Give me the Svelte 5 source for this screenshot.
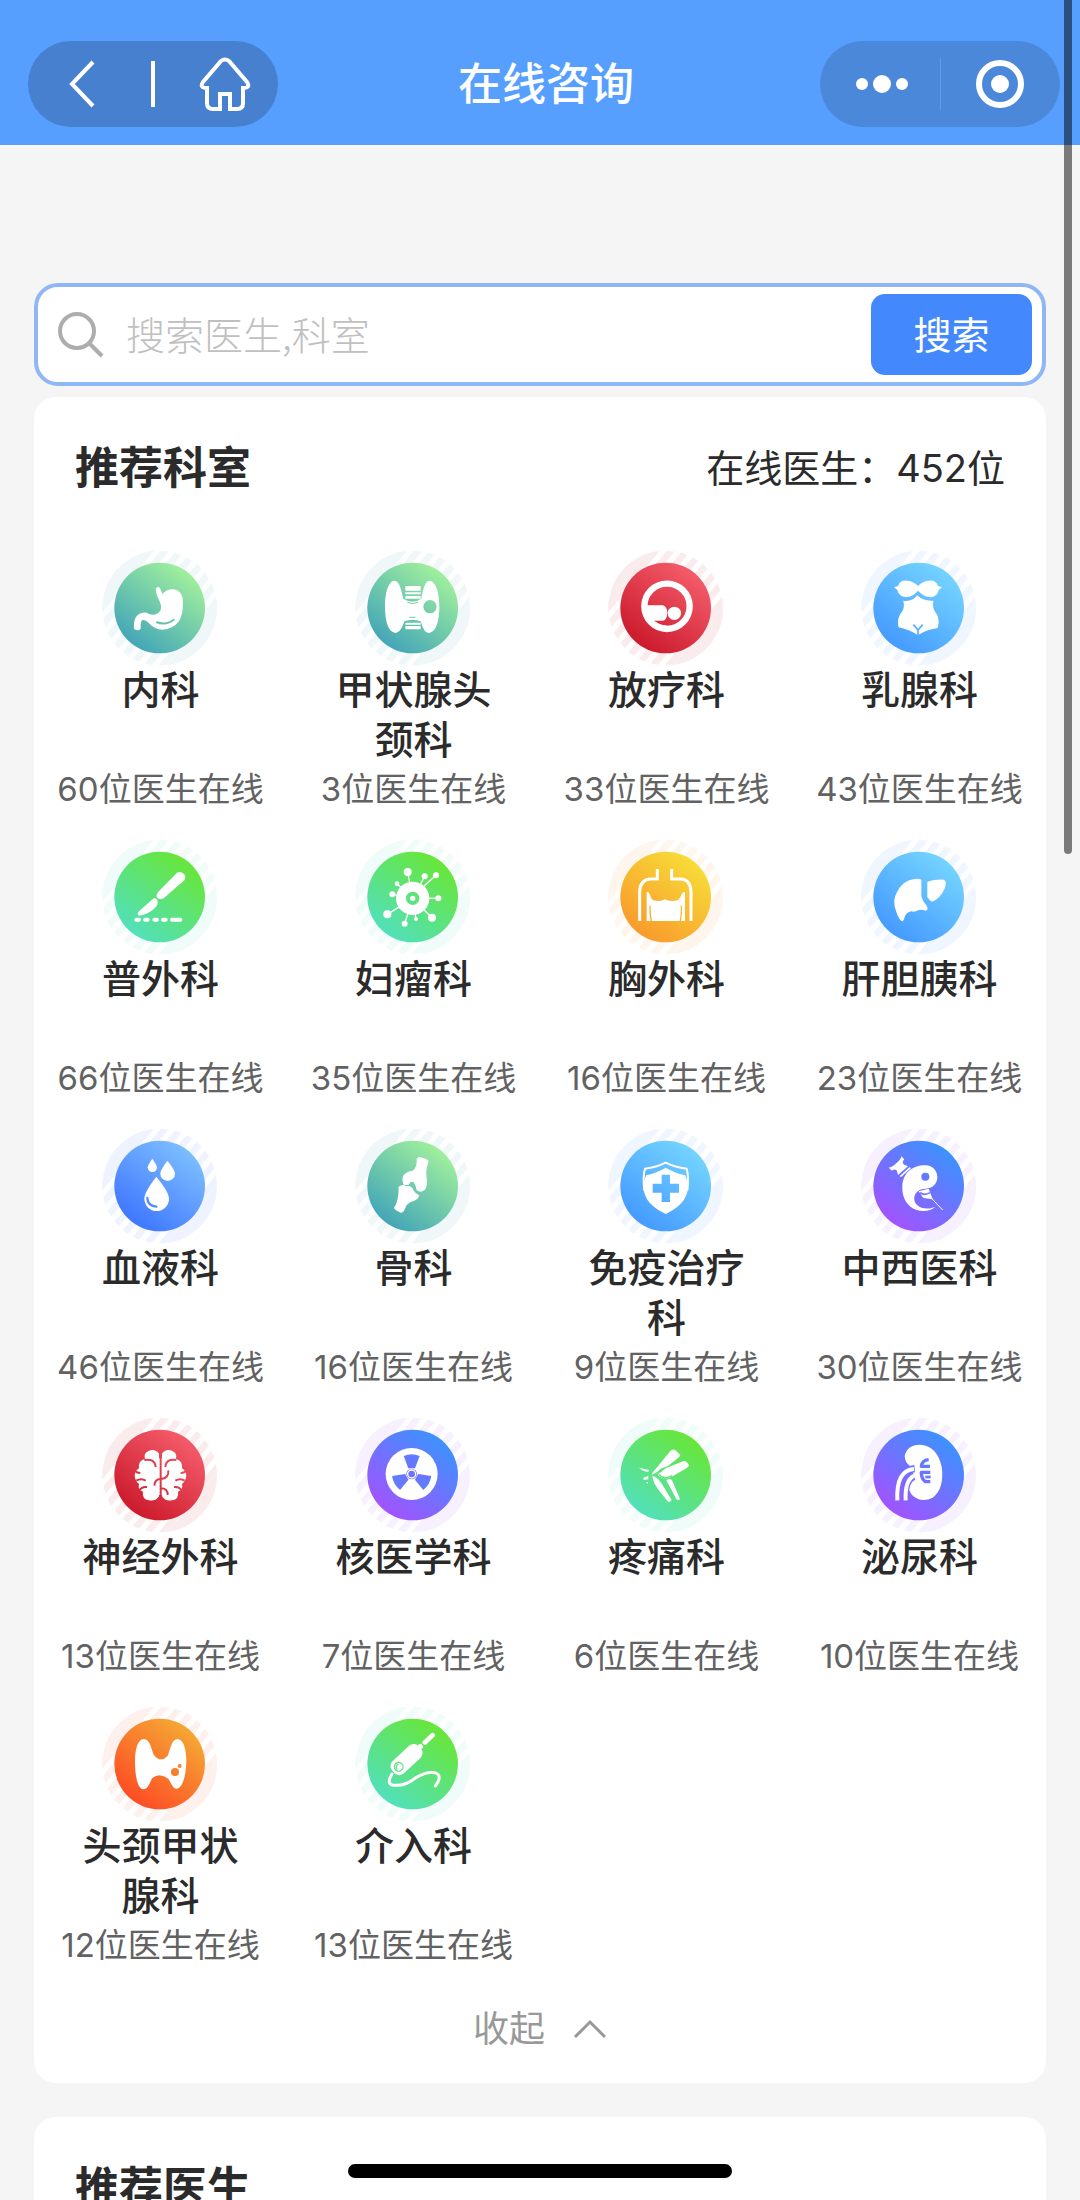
<script>
  let keyword = $state('');

  const palettes = {
    teal: ['#43a5b8', '#a0f09c'],
    red: ['#cb1a2c', '#f45c6a'],
    sky: ['#459aff', '#74d4ff'],
    green: ['#52e0bc', '#68e638'],
    yellow: ['#f99a2c', '#f7dc38'],
    blue: ['#3f76ff', '#7cbeff'],
    purple: ['#a253ff', '#3c92ff'],
    orange: ['#fd4c24', '#f5a834'],
  };

  const departments = [
    { name: '内科', count: 60, icon: 'stomach', color: 'teal' },
    { name: '甲状腺头颈科', count: 3, icon: 'thyroid', color: 'teal' },
    { name: '放疗科', count: 33, icon: 'scanner', color: 'red' },
    { name: '乳腺科', count: 43, icon: 'torso', color: 'sky' },
    { name: '普外科', count: 66, icon: 'scalpel', color: 'green' },
    { name: '妇瘤科', count: 35, icon: 'virus', color: 'green' },
    { name: '胸外科', count: 16, icon: 'chest', color: 'yellow' },
    { name: '肝胆胰科', count: 23, icon: 'liver', color: 'sky' },
    { name: '血液科', count: 46, icon: 'blood', color: 'blue' },
    { name: '骨科', count: 16, icon: 'bone', color: 'teal' },
    { name: '免疫治疗科', count: 9, icon: 'shield', color: 'sky' },
    { name: '中西医科', count: 30, icon: 'taiji', color: 'purple' },
    { name: '神经外科', count: 13, icon: 'brain', color: 'red' },
    { name: '核医学科', count: 7, icon: 'nuclear', color: 'purple' },
    { name: '疼痛科', count: 6, icon: 'knee', color: 'green' },
    { name: '泌尿科', count: 10, icon: 'kidney', color: 'purple' },
    { name: '头颈甲状腺科', count: 12, icon: 'neck', color: 'orange' },
    { name: '介入科', count: 13, icon: 'catheter', color: 'green' },
  ];

  // x, y, radius of each spike on the virus icon
  const spikes = [
    [-15, -75, 12], [36, -62, 9], [70, -65, 9], [-47, -40, 7], [-61, -8, 9],
    [77, 4, 9], [-76, 52, 12], [-24, 80, 9], [10, 66, 6], [58, 62, 12],
  ];
</script>

{#snippet glyph(icon, paint)}
  {#if icon === 'stomach'}
    <path d="M-12-58Q-6-67 1-60L8-42Q22-58 42-56Q70-52 70-18Q70 20 58 40Q38 65 8 65Q-15 64-30 48Q-42 34-52 36Q-58 40-57 62Q-66 72-77 62Q-80 20-52 14Q-42 12-33 17Q-12 26 2 8Q8-4-2-24Q-11-40-12-58Z" />
    <path d="M-10 42Q20 54 44 34" fill="none" stroke={paint} stroke-width="6" />
  {:else if icon === 'thyroid'}
    <path d="M-55-82C-38-82-34-50-28-28Q0-10 26-28C30-50 36-82 50-82C72-80 80-40 80-5C80 40 70 74 48 75C34 74 30 55 24 40Q0 30-25 40C-30 55-38 75-52 75C-74 72-83 40-83-5C-83-40-75-80-55-82Z" />
    <path d="M-22-66h46v14h-46zM-22-47h46v6h-46zM-22-36h46v8h-46zM-22 44h46v6h-46zM-22 54h46v10h-46z" />
    <circle cx="52" cy="-4" r="20" fill={paint} />
    <path d="M-16-17Q0-9 16-17M-10 28H8" fill="none" stroke={paint} stroke-width="3" />
  {:else if icon === 'scanner'}
    <circle cx="4" cy="-5" r="68" fill="none" stroke="#fff" stroke-width="19" />
    <path d="M-62-8H-8Q4-4 5 14Q4 36-8 38H-36Q-20 50 2 52L0 64Q-50 54-60 14Z" />
    <circle cx="26" cy="16" r="20" />
  {:else if icon === 'torso'}
    <path d="M-74-62L-62-66Q-56-84-34-82Q-14-80-2-66Q10-80 30-82Q52-84 58-66L70-62L60-54Q56-32 34-32Q14-34-2-52Q-16-34-38-32Q-60-34-64-54Z" />
    <path d="M-46-22Q-20-18-4-38Q12-20 44-22Q40 3 54 18Q64 36 57 60Q20 66-2 82Q-25 66-60 58Q-66 36-55 18Q-40 3-46-22Z" />
    <path d="M-16 50L-2 66L12 50M-2 66V82" fill="none" stroke={paint} stroke-width="5" />
  {:else if icon === 'scalpel'}
    <path d="M52-73Q62-79 73-69Q80-60 74-50L12 4Q0 9-8 2Q-12-6-4-16Z" />
    <path d="M-18 4Q-6 3-6 16Q-6 28-20 38Q-40 53-62 56Q-70 52-62 43Z" />
    <path d="M-70 68h8M-44 68h8M-16 68h8M10 68h8M37 68h25" fill="none" stroke="#fff" stroke-width="12" stroke-linecap="round" />
  {:else if icon === 'virus'}
    {#each spikes as [x, y, r]}
      <path d="M{x} {y}L{x === 70 ? 20 : 0} {x === 70 ? -20 : 4}" stroke="#fff" stroke-width="4" />
      <circle cx={x} cy={y} {r} />
    {/each}
    <circle cy="4" r="50" />
    <circle cy="4" r="20" fill={paint} />
    <circle cy="4" r="8" />
  {:else if icon === 'chest'}
    <path d="M-78 72V-16Q-77-53-44-54H-25V-84M76 72V-16Q75-53 44-54H18V-84" fill="none" stroke="#fff" stroke-width="9" />
    <path d="M-57-14Q-52-18-48-8Q-44 4-38 10Q-20 14-8 10Q-2 4 4 10Q20 14 36 10Q44 4 48-8Q53-18 58-14V72H-57Z" />
    <path d="M-47 26Q-48 50-43 72M47 26Q49 50 44 72" fill="none" stroke={paint} stroke-width="4" />
  {:else if icon === 'liver'}
    <path d="M8-52V-2Q12 14 24 26Q31 40 20 41Q10 36-2 40Q-12 47-22 43Q-38 46-42 60Q-46 74-50 73Q-60 68-68 42Q-80 10-65-15Q-48-50-12-54Q2-56 8-52Z" />
    <path d="M26-46Q50-54 76-52Q85-46 79-28Q66 4 40 14Q33 12 26 0Z" />
  {:else if icon === 'blood'}
    <path d="M-22-82Q-8-62-8-56A14 14 0 0 1-36-56Q-36-62-22-82Z" />
    <path d="M23-76Q46-48 46-37A22 22 0 0 1 2-37Q2-48 23-76Z" />
    <path d="M-10-28Q28 18 28 38A37 37 0 0 1-46 38Q-46 18-10-28Z" />
    <path d="M-37 36Q-36 60-10 62" fill="none" stroke={paint} stroke-width="7" stroke-linecap="round" />
  {:else if icon === 'bone'}
    <path d="M12-80Q18-92 30-84Q44-82 48-73Q38-50 42-25Q46 0 36 12Q24 22 12 13Q10-2 2-12Q-6-16-12-4L-26-2Q-34-18-28-32Q-18-44 0-46Q14-56 12-80Z" />
    <path d="M-42 2Q-30-8-20 1Q-4-4 2 12Q8 24 20 28Q16 44-6 48Q-18 54-22 66Q-28 82-36 80Q-52 74-56 66Q-42 46-42 2Z" />
  {:else if icon === 'shield'}
    <path d="M-58-32Q-25-40 0-55Q25-40 58-32Q66-20 66 10Q62 55 0 84Q-62 55-66 10Q-66-20-58-32Z" />
    <path d="M-64 14Q-69-28-62-52Q-28-56 0-70Q28-56 63-52Q70-28 65 14" fill="none" stroke="#fff" stroke-width="6" />
    <path d="M-12-34h25v27h27v27h-27v28h-25v-28h-27v-27h27z" fill={paint} />
  {:else if icon === 'taiji'}
    <path d="M20-62C43-62 56-45 56-26C56-6 40 8 22 8C0 8-16 22-13 42C-8 66 22 74 50 62Q34 76 12 75C-30 72-50 40-49 2C-48-38-20-62 20-62Z" />
    <circle cx="20" cy="-28" r="12" fill={paint} />
    <path d="M0 16L14 36L42 40L30 8Z" />
    <path d="M4 20Q18 30 34 20" fill="none" stroke={paint} stroke-width="5" />
    <path d="M38 36L72 72" stroke="#fff" stroke-width="3" />
    <g transform="translate(-55 -55) rotate(-42)">
      <path d="M-26-24Q-22-18 0-18Q22-18 26-24L25-10Q14-10 14 0L20 12H-20L-14 0Q-14-10-25-10Z" />
      <path d="M-18 20H22" stroke="#fff" stroke-width="5" />
    </g>
  {:else if icon === 'brain'}
    <path d="M-2-64Q-14-80-32-73Q-50-66-44-48Q-66-42-62-20Q-78-10-74 8Q-70 22-62 26Q-66 44-50 50Q-54 72-32 76Q-12 80-2 64ZM7-64Q18-80 37-73Q54-66 49-48Q70-42 67-20Q83-10 79 8Q75 22 67 26Q71 44 55 50Q59 72 37 76Q17 80 7 64Z" />
    <path d="M-2-50H7V60H-2Z" />
    <path d="M3-75V76M-46-45Q-14-50-12-24M50-45Q19-50 17-24M-74-14Q-70-6-58-6M79-14Q75-6 63-6M-70 17Q-56 8-42 17M75 17Q61 8 47 17M-60 46Q-54 34-38 36M65 46Q59 34 43 36M26-14Q28 10 3 12Q-15 12-16 32M3 40Q25 40 24 60" fill="none" stroke={paint} stroke-width="6" />
  {:else if icon === 'nuclear'}
    <g transform="translate(-3 -3)">
      <circle r="78" />
      {#each [0, 120, 240] as angle}
        <path d="M-24-54Q0-64 24-54L10-17H-10Z" fill={paint} transform="rotate({angle})" />
      {/each}
      <circle r="16" fill={paint} />
      <circle r="12" fill="none" stroke="#fff" stroke-width="4" />
    </g>
  {:else if icon === 'knee'}
    <path d="M14-72Q22-80 30-74L44-60Q42-54 36-50L8-28Q-18-20-24-10L-42 0Q-38-12-30-18Z" />
    <path d="M54-42Q62-44 70-30Q70-24 62-20L22 3Q-2 18-22 2Q-24-6-14-8Q-8-14 0-20Z" />
    <path d="M-40 2Q-20 8-8 32L18 75Q12 84 6 79L-22 44Q-38 22-40 2Z" />
    <path d="M2 16Q12 6 20 18L43 72Q38 78 32 72Z" />
    <path d="M-20-2Q-6 16 20 2" fill="none" stroke={paint} stroke-width="4" />
    <path d="M-80-22L-50-15L-52-10Q-68-10-80-22ZM-67 8L-52 3V13L-66 15ZM-59 21h6l-1 6z" />
  {:else if icon === 'kidney'}
    <path d="M-42-56Q-36-90 4-91Q55-88 69-25Q78 40 42 68Q8 86-20 60Q-34 40-34 18Q-32 4-16-4L-18-24Q-40-30-42-56Z" />
    <path d="M-63 76Q-68-14-12-19M-40 76Q-44 16-14 4" fill="none" stroke={paint} stroke-width="22" />
    <path d="M-64 76Q-68-14-14-18M-39 76Q-42 16-14 2" fill="none" stroke="#fff" stroke-width="12" />
    <path d="M30-46Q10-44 8-26H34M35-8H8Q8 12 20 20H35" fill="none" stroke={paint} stroke-width="10" stroke-linejoin="round" />
    <path d="M20 6H36" stroke={paint} stroke-width="8" />
  {:else if icon === 'neck'}
    <path d="M-48-75C-28-75-26-45-18-28Q2-2 24-24C32-45 36-75 54-75C74-72 80-40 80-5C78 40 68 74 50 74C38 72 34 55 26 44Q0 24-22 42C-30 55-34 76-50 76C-68 72-74 30-74-5C-74-45-66-74-48-75Z" />
    <circle cx="46" cy="24" r="12" fill={paint} />
    <circle cx="60" cy="6" r="6" fill={paint} />
  {:else if icon === 'catheter'}
    <g transform="translate(-20 -12) rotate(-43)">
      <rect x="-52" y="-25" width="108" height="50" rx="20" />
      <rect x="54" y="-8" width="12" height="16" rx="5" />
      <rect x="70" y="-7" width="46" height="14" rx="6" />
      <circle cx="-30" r="13" fill="none" stroke={paint} stroke-width="4" />
      <path d="M-38 2A8 8 0 0 1-26-6" fill="none" stroke={paint} stroke-width="4" />
    </g>
    <path d="M-62 30Q-84 66-48 64Q-20 64 8 42Q40 22 66 26Q92 34 68 66" fill="none" stroke="#fff" stroke-width="9" stroke-linecap="round" />
  {/if}
{/snippet}

<div class="page" lang="zh-CN">
  <header class="navbar">
    <div class="capsule capsule-left">
      <button aria-label="返回">
        <svg width="26" height="48" viewBox="0 0 26 48">
          <path d="M24 2L3 24L24 46" />
        </svg>
      </button>
      <i class="line"></i>
      <button aria-label="首页">
        <svg width="52" height="54" viewBox="0 0 52 54">
          <path d="M22 4Q26 1 30 4L48 25Q52 31 44 31V46Q44 52 38 52H31V37H21V52H14Q8 52 8 46V31Q0 31 4 25Z" />
        </svg>
      </button>
    </div>
    <h1>在线咨询</h1>
    <div class="capsule capsule-right">
      <button aria-label="更多">
        <svg class="solid" width="54" height="20" viewBox="0 0 54 20">
          <circle cx="7" cy="10" r="6" />
          <circle cx="27" cy="10" r="9" />
          <circle cx="47" cy="10" r="6" />
        </svg>
      </button>
      <i class="line thin"></i>
      <button aria-label="关闭">
        <svg width="50" height="50" viewBox="0 0 50 50">
          <circle cx="25" cy="25" r="21" stroke-width="6" />
          <circle class="dot" cx="25" cy="25" r="9" />
        </svg>
      </button>
    </div>
  </header>

  <main>
    <form class="search" onsubmit={(e) => e.preventDefault()}>
      <svg width="46" height="46" viewBox="0 0 46 46">
        <circle cx="19" cy="19" r="17" />
        <path d="M31 31L44 44" />
      </svg>
      <input type="text" placeholder="搜索医生,科室" aria-label="搜索医生,科室" bind:value={keyword} />
      <button>搜索</button>
    </form>

    <section class="card">
      <div class="card-head">
        <h2>推荐科室</h2>
        <span>在线医生：452位</span>
      </div>
      <ul>
        {#each departments as dept (dept.name)}
          {@const [from, to] = palettes[dept.color]}
          <li>
            <a href="#{dept.icon}">
              <svg class="icon" viewBox="-170 -177 348 348" aria-hidden="true">
                <defs>
                  <linearGradient id="fill-{dept.icon}" gradientUnits="userSpaceOnUse" x1="-84" y1="110" x2="84" y2="-110">
                    <stop offset="0" stop-color={from} />
                    <stop offset="1" stop-color={to} />
                  </linearGradient>
                  <pattern id="stripe-{dept.icon}" width="36" height="36" patternUnits="userSpaceOnUse">
                    <rect width="20" height="36" fill={from} />
                  </pattern>
                </defs>
                <g transform="rotate(40)" opacity="0.08">
                  <circle r="172" fill="url(#stripe-{dept.icon})" />
                  <path d="M-124-119A172 172 0 0 0-124 119ZM128-115A172 172 0 0 1 128 115Z" fill={from} />
                </g>
                <circle r="136" fill="url(#fill-{dept.icon})" />
                <g fill="#fff">
                  {@render glyph(dept.icon, `url(#fill-${dept.icon})`)}
                </g>
              </svg>
              <strong>{dept.name}</strong>
              <small>{dept.count}位医生在线</small>
            </a>
          </li>
        {/each}
      </ul>
      <button class="fold">
        收起
        <svg width="34" height="20" viewBox="0 0 34 20">
          <path d="M2 18L17 3L32 18" />
        </svg>
      </button>
    </section>

    <section class="card">
      <div class="card-head">
        <h2>推荐医生</h2>
      </div>
    </section>
  </main>

  <div class="scrollbar"></div>
  <div class="home-bar"></div>
</div>

<style>
  :global(body) {
    background: #f5f5f5;
  }
  .page {
    position: relative;
    height: 100vh;
    overflow: hidden;
    background: #f5f5f5;
    color: #2b2b2b;
    font-family: Inter, 'Noto Sans CJK SC', sans-serif;
  }
  button {
    display: flex;
    align-items: center;
    justify-content: center;
    padding: 0;
    border: 0;
    background: none;
    font-family: inherit;
    cursor: pointer;
  }
  h1,
  h2,
  ul {
    margin: 0;
    padding: 0;
  }

  .navbar {
    display: grid;
    grid-template-columns: 1fr auto 1fr;
    align-items: center;
    padding: 41px 20px 18px 28px;
    background: #579fff;
  }
  .navbar h1 {
    padding-left: 4px;
    color: #fff;
    font-size: 44px;
    font-weight: 500;
    line-height: 60px;
  }
  .capsule {
    display: grid;
    grid-template-columns: 1fr auto 1fr;
    align-items: center;
    height: 86px;
    border-radius: 43px;
    background: #4680cf;
  }
  .capsule button {
    height: 86px;
  }
  .capsule svg {
    fill: none;
    stroke: #fff;
    stroke-width: 4;
  }
  .capsule .solid,
  .capsule .dot {
    fill: #fff;
    stroke: none;
  }
  .capsule-left {
    width: 250px;
  }
  .capsule-left button:first-child {
    padding-right: 16px;
  }
  .capsule-left button:last-child {
    padding-left: 16px;
  }
  .capsule-right {
    width: 240px;
    justify-self: end;
    background: #4b88d9;
  }
  .capsule-right button:first-child {
    padding-left: 4px;
  }
  .line {
    width: 4px;
    height: 46px;
    background: #fff;
  }
  .thin {
    width: 1px;
    height: 52px;
    background: #5f9df0;
  }

  main {
    padding: 138px 34px 0;
  }
  .search {
    display: flex;
    align-items: center;
    padding: 7px 10px 7px 20px;
    border: 4px solid #8fb7f5;
    border-radius: 24px;
    background: #fff;
  }
  .search svg {
    flex: none;
    fill: none;
    stroke: #adadad;
    stroke-width: 4;
  }
  .search input {
    flex: 1;
    min-width: 0;
    padding: 0 22px 4px;
    border: 0;
    outline: 0;
    background: none;
    color: #2b2b2b;
    font: 300 39px 'Noto Sans CJK SC', sans-serif;
  }
  .search input::placeholder {
    color: #c0c0c0;
  }
  .search button {
    box-sizing: border-box;
    width: 161px;
    height: 81px;
    padding-bottom: 4px;
    border-radius: 14px;
    background: #4388fc;
    color: #fff;
    font-size: 38px;
  }

  .card {
    margin-top: 11px;
    padding: 46px 0 29px;
    border-radius: 22px;
    background: #fff;
  }
  .card + .card {
    margin-top: 34px;
  }
  .card-head {
    display: flex;
    align-items: center;
    justify-content: space-between;
    padding: 0 41px;
    line-height: 50px;
  }
  .card-head h2 {
    font-size: 44px;
    font-weight: 700;
  }
  .card-head span {
    font-size: 38px;
  }

  ul {
    display: grid;
    grid-template-columns: repeat(4, 1fr);
    row-gap: 25px;
    margin-top: 56px;
    list-style: none;
  }
  li a {
    display: flex;
    flex-direction: column;
    align-items: center;
    color: inherit;
    text-align: center;
    text-decoration: none;
  }
  .icon {
    width: 116px;
    height: 116px;
    overflow: visible;
  }
  strong {
    width: 160px;
    min-height: 100px;
    font-size: 39px;
    font-weight: 500;
    line-height: 50px;
  }
  small {
    color: #626262;
    font-size: 33px;
    line-height: 48px;
    white-space: nowrap;
  }
  .fold {
    gap: 28px;
    margin: 35px auto 0;
    color: #999;
    font-size: 36px;
    line-height: 50px;
  }
  .fold svg {
    fill: none;
    stroke: #999;
    stroke-width: 3;
  }

  .scrollbar {
    position: absolute;
    top: 0;
    right: 8px;
    width: 8px;
    height: 854px;
    border-radius: 0 0 4px 4px;
    background: rgba(0, 0, 0, 0.5);
  }
  .home-bar {
    position: absolute;
    bottom: 22px;
    left: 50%;
    width: 384px;
    height: 14px;
    border-radius: 7px;
    background: #000;
    transform: translateX(-50%);
  }
</style>
